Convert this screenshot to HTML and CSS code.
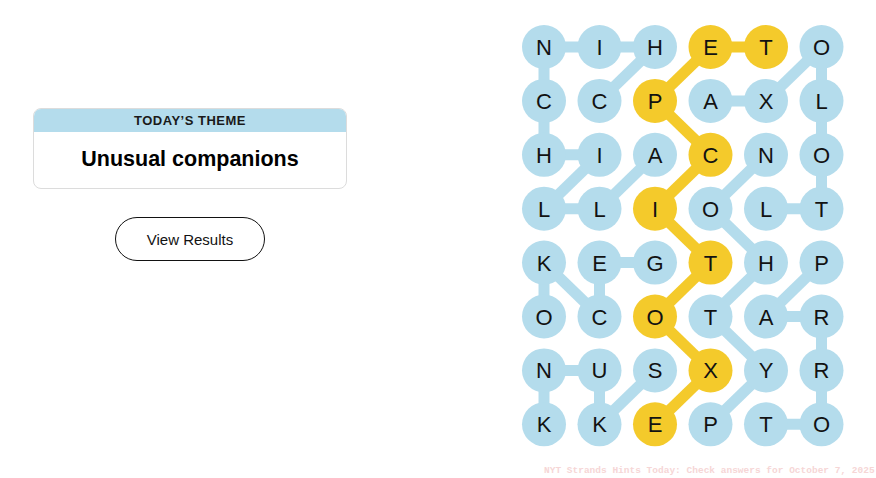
FILE: index.html
```html
<!DOCTYPE html>
<html lang="en">
<head>
<meta charset="utf-8">
<title>Strands</title>
<link rel="stylesheet" href="styles.css">
</head>
<body>
<main class="page">
  <section class="side">
    <div class="theme-card">
      <div class="theme-head">TODAY’S THEME</div>
      <div class="theme-body">Unusual companions</div>
    </div>
    <button class="results-btn" type="button">View Results</button>
  </section>
  <svg class="board" width="340" height="440" viewBox="0 0 340 440">
    <g class="links blue">
      <!-- CHINCHILLA -->
      <line x1="140" y1="29" x2="84.5" y2="82.9"/>
      <line x1="140" y1="29" x2="29" y2="29"/>
      <line x1="29" y1="29" x2="29" y2="136.8"/>
      <line x1="29" y1="136.8" x2="84.5" y2="136.8"/>
      <line x1="84.5" y1="136.8" x2="29" y2="190.7"/>
      <line x1="29" y1="190.7" x2="84.5" y2="190.7"/>
      <line x1="84.5" y1="190.7" x2="140" y2="136.8"/>
      <!-- AXOLOTL -->
      <line x1="195.5" y1="82.9" x2="251" y2="82.9"/>
      <line x1="251" y1="82.9" x2="306.5" y2="29"/>
      <line x1="306.5" y1="29" x2="306.5" y2="190.7"/>
      <line x1="306.5" y1="190.7" x2="251" y2="190.7"/>
      <!-- PYTHON -->
      <line x1="195.5" y1="406.3" x2="251" y2="352.4"/>
      <line x1="251" y1="352.4" x2="195.5" y2="298.5"/>
      <line x1="195.5" y1="298.5" x2="251" y2="244.6"/>
      <line x1="251" y1="244.6" x2="195.5" y2="190.7"/>
      <line x1="195.5" y1="190.7" x2="251" y2="136.8"/>
      <!-- PARROT -->
      <line x1="306.5" y1="244.6" x2="251" y2="298.5"/>
      <line x1="251" y1="298.5" x2="306.5" y2="298.5"/>
      <line x1="306.5" y1="298.5" x2="306.5" y2="406.3"/>
      <line x1="306.5" y1="406.3" x2="251" y2="406.3"/>
      <!-- GECKO -->
      <line x1="140" y1="244.6" x2="84.5" y2="244.6"/>
      <line x1="84.5" y1="244.6" x2="84.5" y2="298.5"/>
      <line x1="84.5" y1="298.5" x2="29" y2="244.6"/>
      <line x1="29" y1="244.6" x2="29" y2="298.5"/>
      <!-- SKUNK -->
      <line x1="140" y1="352.4" x2="84.5" y2="406.3"/>
      <line x1="84.5" y1="406.3" x2="84.5" y2="352.4"/>
      <line x1="84.5" y1="352.4" x2="29" y2="352.4"/>
      <line x1="29" y1="352.4" x2="29" y2="406.3"/>
    </g>
    <g class="links gold">
      <line x1="140" y1="406.3" x2="195.5" y2="352.4"/>
      <line x1="195.5" y1="352.4" x2="140" y2="298.5"/>
      <line x1="140" y1="298.5" x2="195.5" y2="244.6"/>
      <line x1="195.5" y1="244.6" x2="140" y2="190.7"/>
      <line x1="140" y1="190.7" x2="195.5" y2="136.8"/>
      <line x1="195.5" y1="136.8" x2="140" y2="82.9"/>
      <line x1="140" y1="82.9" x2="195.5" y2="29"/>
      <line x1="195.5" y1="29" x2="251" y2="29"/>
    </g>
    <g class="cells"></g>
  </svg>
  <div class="watermark">NYT Strands Hints Today: Check answers for October 7, 2025</div>
</main>
<script>
  (function () {
    var rows = ["NIHETO","CCPAXL","HIACNO","LLIOLT","KEGTHP","OCOTAR","NUSXYR","KKEPTO"];
    var gold = {"0,3":1,"0,4":1,"1,2":1,"2,3":1,"3,2":1,"4,3":1,"5,2":1,"6,3":1,"7,2":1};
    var ns = "http://www.w3.org/2000/svg";
    var g = document.querySelector(".cells");
    rows.forEach(function (row, r) {
      row.split("").forEach(function (ch, c) {
        var cx = 29 + 55.5 * c, cy = 29 + 53.9 * r;
        var circ = document.createElementNS(ns, "circle");
        circ.setAttribute("cx", cx);
        circ.setAttribute("cy", cy);
        circ.setAttribute("r", 22);
        circ.setAttribute("class", gold[r + "," + c] ? "dot gold" : "dot blue");
        g.appendChild(circ);
        var t = document.createElementNS(ns, "text");
        t.setAttribute("x", cx);
        t.setAttribute("y", cy + 8);
        t.setAttribute("class", "letter");
        t.textContent = ch;
        g.appendChild(t);
      });
    });
  })();
</script>
</body>
</html>
```

FILE: styles.css
```css
html, body {
  margin: 0;
  padding: 0;
  background: #ffffff;
}

.page {
  position: relative;
  width: 876px;
  height: 478px;
  display: flex;
  align-items: flex-start;
  font-family: "Liberation Sans", Arial, sans-serif;
  color: #121212;
  overflow: hidden;
}

.side {
  width: 314px;
  margin-left: 33px;
  margin-top: 108px;
  display: flex;
  flex-direction: column;
  align-items: center;
}

.theme-card {
  width: 100%;
  box-sizing: border-box;
  border: 1px solid #dcdcdc;
  border-radius: 8px;
  overflow: hidden;
}

.theme-head {
  background: #b4dcec;
  height: 23px;
  line-height: 24px;
  text-align: center;
  font-size: 13px;
  font-weight: 700;
  letter-spacing: 0.5px;
  color: #1a1a1a;
}

.theme-body {
  height: 56px;
  line-height: 54px;
  text-align: center;
  font-size: 21.5px;
  font-weight: 700;
  color: #000;
}

.results-btn {
  margin-top: 28px;
  width: 150px;
  height: 44px;
  border: 1px solid #121212;
  border-radius: 22px;
  background: #fff;
  font-family: "Liberation Sans", Arial, sans-serif;
  font-size: 15px;
  color: #121212;
  padding: 0;
}

.board {
  margin-left: 168px;
  margin-top: 18px;
  flex: none;
}

.links line {
  stroke-width: 11;
}

.links.blue line {
  stroke: #b4dcec;
}

.links.gold line {
  stroke: #f4ca2b;
}

.dot.blue {
  fill: #b4dcec;
}

.dot.gold {
  fill: #f4ca2b;
}

.letter {
  font-family: "Liberation Sans", Arial, sans-serif;
  font-size: 22px;
  fill: #121212;
  text-anchor: middle;
}

.watermark {
  position: absolute;
  left: 544px;
  top: 465px;
  white-space: nowrap;
  font-family: "Liberation Mono", "Courier New", monospace;
  font-size: 9.5px;
  font-weight: 700;
  color: #f6d6d6;
}
```
